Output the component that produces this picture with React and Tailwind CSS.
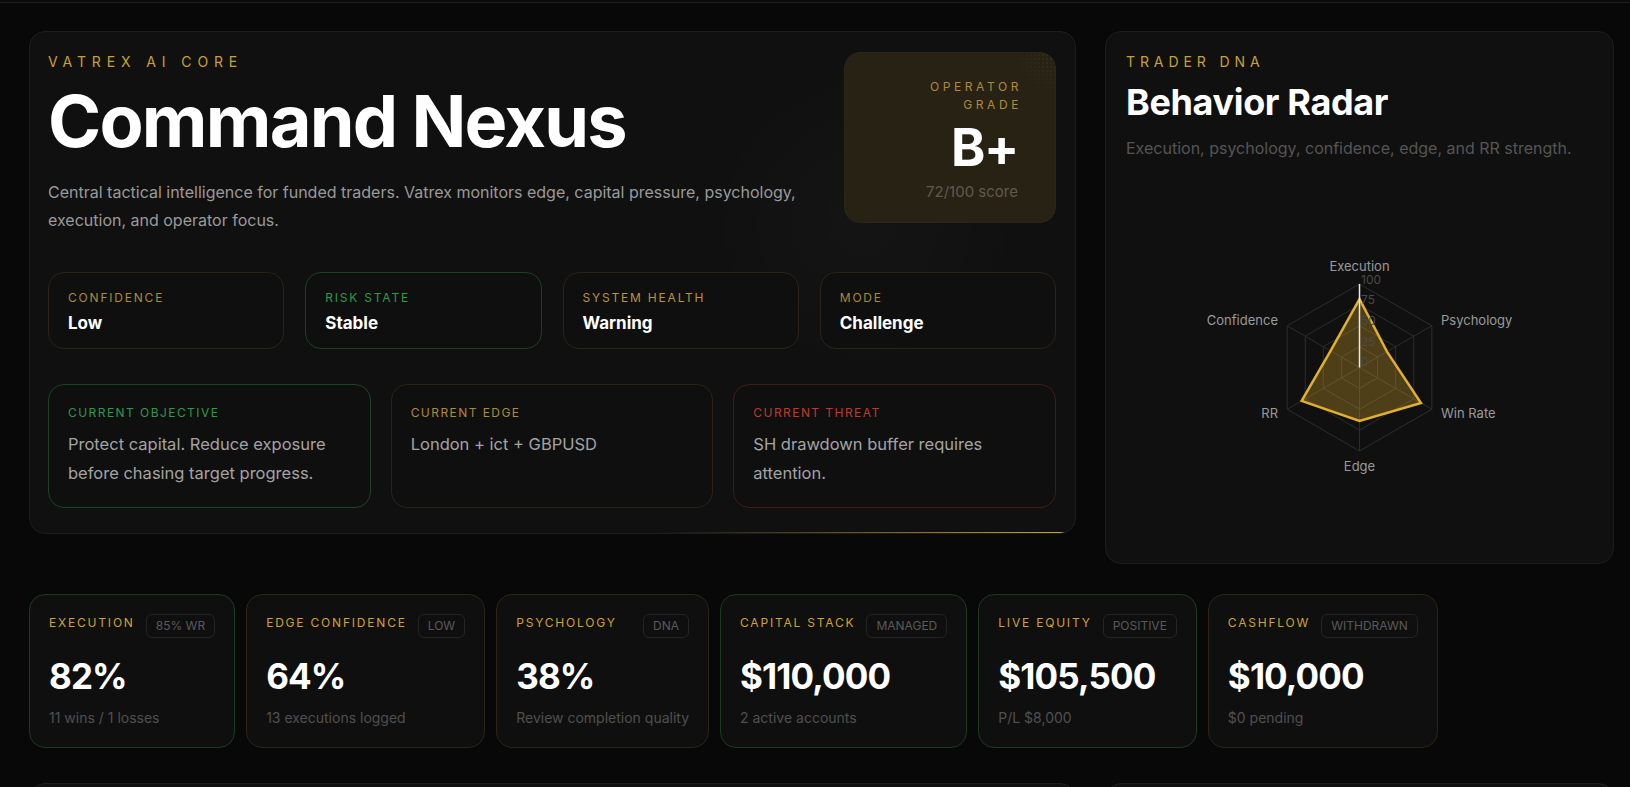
import React from "react";

const statusCards = [
  { label: "CONFIDENCE", value: "Low", border: "border-[#2a2216]", color: "text-[#a68c3e]" },
  { label: "RISK STATE", value: "Stable", border: "border-[#1b3f24]", color: "text-[#2f9a48]" },
  { label: "SYSTEM HEALTH", value: "Warning", border: "border-[#2a2216]", color: "text-[#b8953a]" },
  { label: "MODE", value: "Challenge", border: "border-[#2a2216]", color: "text-[#a68a3a]" },
];

const objectiveCards = [
  { label: "CURRENT OBJECTIVE", text: "Protect capital. Reduce exposure before chasing target progress.", border: "border-[#1b4326]", color: "text-[#2e9a48]" },
  { label: "CURRENT EDGE", text: "London + ict + GBPUSD", border: "border-[#2a2216]", color: "text-[#b08a35]" },
  { label: "CURRENT THREAT", text: "SH drawdown buffer requires attention.", border: "border-[#3f1d17]", color: "text-[#c0392b]" },
];

const stats = [
  { label: "EXECUTION", badge: "85% WR", value: "82%", sub: "11 wins / 1 losses", border: "border-[#1b3a22]" },
  { label: "EDGE CONFIDENCE", badge: "LOW", value: "64%", sub: "13 executions logged", border: "border-[#2c2416]" },
  { label: "PSYCHOLOGY", badge: "DNA", value: "38%", sub: "Review completion quality", border: "border-[#2c2416]" },
  { label: "CAPITAL STACK", badge: "MANAGED", value: "$110,000", sub: "2 active accounts", border: "border-[#1b3a22]" },
  { label: "LIVE EQUITY", badge: "POSITIVE", value: "$105,500", sub: "P/L $8,000", border: "border-[#1b3a22]" },
  { label: "CASHFLOW", badge: "WITHDRAWN", value: "$10,000", sub: "$0 pending", border: "border-[#2c2416]" },
];

const radarData = [
  { name: "Execution", angle: 90, value: 82 },
  { name: "Psychology", angle: 30, value: 38 },
  { name: "Win Rate", angle: -30, value: 85 },
  { name: "Edge", angle: -90, value: 64 },
  { name: "RR", angle: -150, value: 80 },
  { name: "Confidence", angle: 150, value: 40 },
];

function Radar() {
  const cx = 233.5;
  const cy = 180.5;
  const R = 83.5;
  const pt = (angle, r) => {
    const a = (angle * Math.PI) / 180;
    return [cx + r * Math.cos(a), cy - r * Math.sin(a)];
  };
  const hex = (r) => radarData.map((d) => pt(d.angle, r).join(",")).join(" ");
  const poly = radarData.map((d) => pt(d.angle, (R * d.value) / 100).join(",")).join(" ");
  const labels = [
    { t: "Execution", x: 233.5, y: 80, anchor: "middle" },
    { t: "Psychology", x: 315, y: 134, anchor: "start" },
    { t: "Win Rate", x: 315, y: 227, anchor: "start" },
    { t: "Edge", x: 233.5, y: 280, anchor: "middle" },
    { t: "RR", x: 152, y: 227, anchor: "end" },
    { t: "Confidence", x: 152, y: 134, anchor: "end" },
  ];
  const ticks = [
    { t: "100", y: 94 },
    { t: "75", y: 114 },
    { t: "50", y: 135 },
    { t: "25", y: 156 },
    { t: "0", y: 176 },
  ];
  return (
    <svg width="467" height="356" viewBox="0 0 467 356" className="block">
      {[1, 0.75, 0.5, 0.25].map((f) => (
        <polygon key={f} points={hex(R * f)} fill="none" stroke="#2c2c2c" strokeWidth="1" />
      ))}
      {radarData.map((d) => {
        const [x, y] = pt(d.angle, R);
        return <line key={d.name} x1={cx} y1={cy} x2={x} y2={y} stroke="#2c2c2c" strokeWidth="1" />;
      })}
      <polygon points={poly} fill="#d4a52a" fillOpacity="0.32" stroke="#e0b030" strokeWidth="2.5" strokeLinejoin="miter" />
      <line x1={cx} y1={cy} x2={cx} y2={cy - R} stroke="#e8e8e8" strokeWidth="1.5" />
      {ticks.map((k) => (
        <text key={k.t} x={cx + 1.5} y={k.y} fill="#4a4a4a" fontSize="12" dominantBaseline="middle" fontFamily="Inter, sans-serif">
          {k.t}
        </text>
      ))}
      {labels.map((l) => (
        <text key={l.t} x={l.x} y={l.y} fill="#9a9a9a" fontSize="13" textAnchor={l.anchor} dominantBaseline="middle" fontFamily="Inter, sans-serif">
          {l.t}
        </text>
      ))}
    </svg>
  );
}

export default function App() {
  return (
    <div className="min-h-screen bg-[#080808] font-[Inter,sans-serif] overflow-hidden">
      <div className="h-[2px] bg-[#0b0b0b]" />
      <div className="h-px bg-[#1f1f1f]" />
      <div className="pl-[29px] pr-[16px] pt-[28px]">
        <div className="grid grid-cols-[1047px_509px] gap-x-[29px] items-start">
          {/* Main card */}
          <div className="relative rounded-2xl border border-[#1d1d1d] bg-[#101010] pl-[18px] pr-[19px] pt-5 pb-[25px] overflow-hidden">
            <div className="pointer-events-none absolute right-[40px] top-[40px] h-[300px] w-[340px] rounded-full bg-[radial-gradient(circle,rgba(255,255,255,0.018),transparent_70%)]" />
            <div className="relative flex justify-between items-start">
              <div>
                <div className="text-sm leading-5 tracking-[0.42em] text-[#c9a130]">VATREX AI CORE</div>
                <h1 className="mt-[13px] text-[72px] leading-none font-bold tracking-tight text-white">Command Nexus</h1>
                <p className="mt-[21px] max-w-[775px] text-[16px] leading-7 text-[#9a9a9a]">
                  Central tactical intelligence for funded traders. Vatrex monitors edge, capital pressure, psychology, execution, and operator focus.
                </p>
              </div>
              <div className="relative w-[212px] h-[171px] shrink-0 rounded-2xl bg-[#272214] border border-[#2c2617] px-[37px] pt-[25px] text-right overflow-hidden">
                <div className="absolute right-0 top-0 h-[40px] w-[50px] bg-[radial-gradient(#3b3421_1px,transparent_1.2px)] bg-[length:4px_4px] opacity-70 [mask-image:radial-gradient(circle_at_top_right,black,transparent_70%)]" />
                <div className="relative text-xs leading-[18px] tracking-[0.3em] text-[#b08a3a] -mr-[4px]">OPERATOR GRADE</div>
                <div className="relative mt-[8px] text-[52px] leading-none font-bold text-white tracking-tight">B+</div>
                <div className="relative mt-[8px] text-[15px] leading-5 text-[#5f5a4c]">72/100 score</div>
              </div>
            </div>

            <div className="relative mt-[38px] grid grid-cols-4 gap-[21px]">
              {statusCards.map((c) => (
                <div key={c.label} className={`h-[77px] rounded-2xl border ${c.border} bg-[#0f0f0f] px-[19px] pt-[17px]`}>
                  <div className={`text-xs leading-4 tracking-[0.15em] ${c.color}`}>{c.label}</div>
                  <div className="mt-[5px] text-[17px] leading-6 font-bold text-white">{c.value}</div>
                </div>
              ))}
            </div>

            <div className="relative mt-[35px] grid grid-cols-3 gap-5">
              {objectiveCards.map((c) => (
                <div key={c.label} className={`h-[124px] rounded-2xl border ${c.border} bg-[#0f0f0f] px-[19px] pt-5`}>
                  <div className={`text-xs leading-4 tracking-[0.12em] ${c.color}`}>{c.label}</div>
                  <div className="mt-[9px] text-[16.5px] leading-[29px] text-[#a3a3a3]">{c.text}</div>
                </div>
              ))}
            </div>
            <div className="absolute bottom-0 left-[60%] right-[10px] h-px bg-gradient-to-r from-transparent to-[#c9a13a]" />
          </div>

          {/* Right card */}
          <div className="h-[533px] rounded-2xl border border-[#1d1d1d] bg-[#101010] px-5 pt-5">
            <div className="text-sm leading-5 tracking-[0.35em] text-[#c9a130]">TRADER DNA</div>
            <h2 className="mt-[10px] text-4xl leading-10 font-bold tracking-[-0.01em] text-white">Behavior Radar</h2>
            <p className="mt-[14px] text-base leading-6 text-[#555555]">Execution, psychology, confidence, edge, and RR strength.</p>
            <div className="mt-[27px]">
              <Radar />
            </div>
          </div>
        </div>

        {/* Stats row */}
        <div className="mt-[30px] flex gap-[11px] items-start">
          {stats.map((s) => (
            <div key={s.label} className={`rounded-2xl border ${s.border} bg-[#0f0f0f] p-[19px]`}>
              <div className="flex items-start justify-between gap-[11px]">
                <div className="pt-[1px] text-xs leading-4 tracking-[0.15em] text-[#d1a32b]">{s.label}</div>
                <div className="rounded-md border border-[#232323] px-[9px] py-[3px] text-xs leading-4 text-[#5a5a5a]">{s.badge}</div>
              </div>
              <div className="mt-[18px] text-[35px] leading-10 font-bold tracking-tight text-white">{s.value}</div>
              <div className="mt-3 text-sm leading-5 text-[#505050]">{s.sub}</div>
            </div>
          ))}
        </div>

        {/* Next row (partially visible) */}
        <div className="mt-[35px] grid grid-cols-[1047px_509px] gap-x-[29px]">
          <div className="h-[200px] rounded-2xl border border-[#1d1d1d] bg-[#101010]" />
          <div className="h-[200px] rounded-2xl border border-[#1d1d1d] bg-[#101010]" />
        </div>
      </div>
    </div>
  );
}
